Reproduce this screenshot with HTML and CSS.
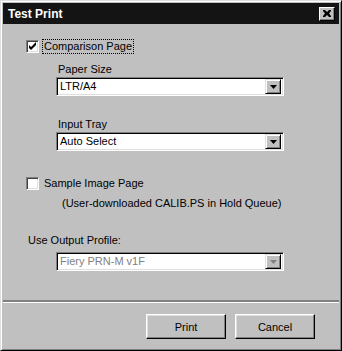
FILE: index.html
```html
<!DOCTYPE html>
<html>
<head>
<meta charset="utf-8">
<title>Test Print</title>
<link rel="stylesheet" href="styles.css">
</head>
<body>
<div class="win">
  <div class="titlebar">
    <span class="title">Test Print</span>
    <span class="close"><svg width="8" height="7" viewBox="0 0 8 7"><path d="M0 0h2l2 2 2-2h2v1l-2 2.5 2 2.5v1h-2l-2-2-2 2h-2v-1l2-2.5-2-2.5z" fill="#000"/></svg></span>
  </div>
  <div class="body">
    <div class="check">
      <span class="box"><svg width="9" height="9" viewBox="0 0 9 9"><path d="M1 3l2 2 5-5v2l-5 5-2-2z" fill="#000"/><path d="M1 4l2 2 5-5v2l-5 5-2-2z" fill="#000"/></svg></span>
      <span class="text focus">Comparison Page</span>
    </div>
    <div class="label l1">Paper Size</div>
    <div class="select">
      <span class="value">LTR/A4</span>
      <span class="arrow"><svg width="7" height="4" viewBox="0 0 7 4"><path d="M0 0h7l-3.5 4z" fill="#000"/></svg></span>
    </div>
    <div class="label l2">Input Tray</div>
    <div class="select">
      <span class="value">Auto Select</span>
      <span class="arrow"><svg width="7" height="4" viewBox="0 0 7 4"><path d="M0 0h7l-3.5 4z" fill="#000"/></svg></span>
    </div>
    <div class="check c2">
      <span class="box"></span>
      <span class="text">Sample Image Page</span>
    </div>
    <div class="note">(User-downloaded CALIB.PS in Hold Queue)</div>
    <div class="label l3">Use Output Profile:</div>
    <div class="select disabled">
      <span class="value">Fiery PRN-M v1F</span>
      <span class="arrow"><svg width="7" height="4" viewBox="0 0 7 4"><path d="M0 0h7l-3.5 4z" fill="#808080"/></svg></span>
    </div>
  </div>
  <div class="sep"></div>
  <div class="buttons">
    <span class="btn">Print</span>
    <span class="btn">Cancel</span>
  </div>
</div>
</body>
</html>
```

FILE: styles.css
```css
body{margin:0;padding:0;background:#c0c0c0;font-family:"Liberation Sans",Arial,sans-serif;font-size:11px;color:#000;}

.win{width:342px;height:351px;box-sizing:border-box;display:flex;flex-direction:column;background:#c0c0c0;
  border:1px solid;border-color:#dfdfdf #000 #000 #dfdfdf;padding:2px;
  box-shadow:inset 1px 1px #fff,inset -1px -1px #808080;}

.titlebar{height:21px;flex:none;background:#141414;display:flex;align-items:center;justify-content:space-between;padding:0 4px 0 5px;}
.title{color:#fff;font-weight:bold;font-size:12px;}
.close{width:14px;height:12px;background:#c0c0c0;border:1px solid;border-color:#fff #000 #000 #fff;
  box-shadow:inset -1px -1px #808080;display:flex;align-items:center;justify-content:center;}

.body{padding:15px 0 0 23px;display:flex;flex-direction:column;align-items:flex-start;}

.check{display:flex;align-items:center;height:15px;}
.box{width:11px;height:11px;background:#fff;border:1px solid;border-color:#808080 #fff #fff #808080;
  box-shadow:inset 1px 1px #404040,inset -1px -1px #dfdfdf;display:flex;align-items:center;justify-content:center;}
.check .text{margin-left:3px;padding:0 1px;line-height:13px;border:1px dotted transparent;}
.check .focus{border-color:#000;}
.c2{margin-top:25px;}

.label{margin-left:32px;line-height:13px;}
.l1{margin-top:9px;}
.l2{margin-top:22px;}
.l3{margin-left:2px;margin-top:24px;}
.l3 + .select{margin-top:5px;}

.select{margin-left:30px;margin-top:1px;width:228px;height:19px;box-sizing:border-box;background:#fff;
  border:1px solid;border-color:#808080 #fff #fff #808080;box-shadow:inset 1px 1px #000,inset -1px -1px #dfdfdf;
  display:flex;align-items:center;justify-content:space-between;padding:2px 2px 2px 3px;}
.select .value{line-height:13px;}
.arrow{width:14px;height:13px;background:#c0c0c0;border:1px solid;border-color:#dfdfdf #000 #000 #dfdfdf;
  box-shadow:inset 1px 1px #fff,inset -1px -1px #808080;display:flex;align-items:center;justify-content:center;}
.disabled .value{color:#808080;}

.note{margin-left:36px;margin-top:6px;line-height:13px;}

.sep{margin-top:auto;height:0;border-top:2px solid #808080;border-bottom:1px solid #fff;}

.buttons{display:flex;justify-content:flex-end;gap:9px;padding:11px 24px 9px 0;}
.btn{width:78px;height:23px;display:flex;align-items:center;justify-content:center;background:#c0c0c0;
  border:1px solid;border-color:#fff #000 #000 #fff;box-shadow:inset -1px -1px #808080,inset 1px 1px #dfdfdf;}
```
